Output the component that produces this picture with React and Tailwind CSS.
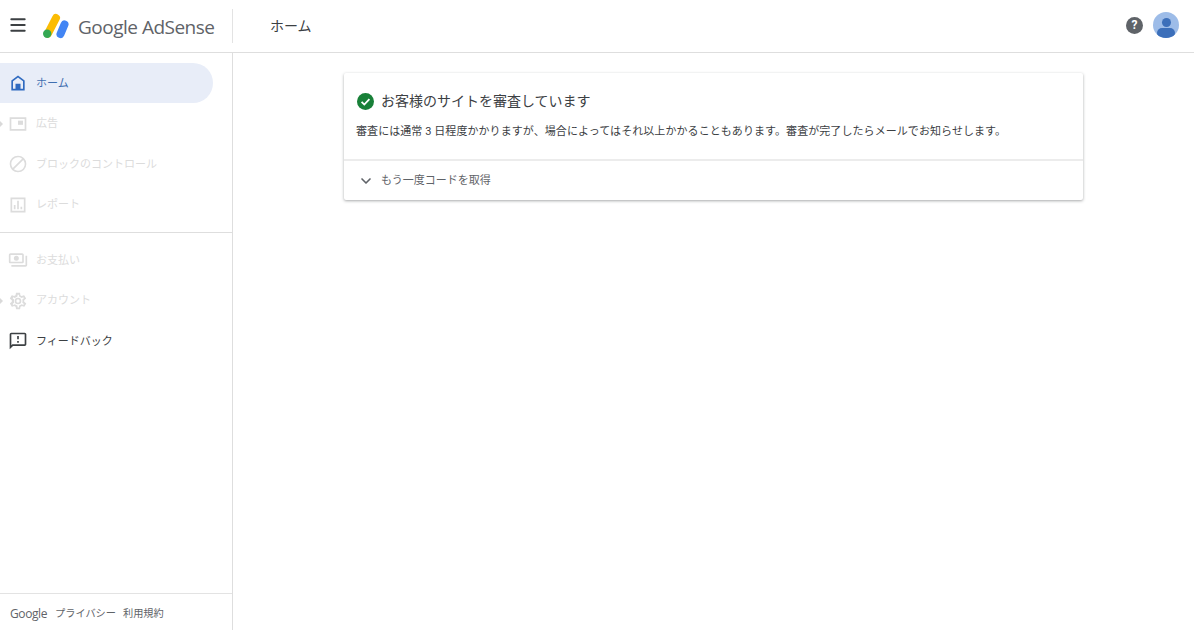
import React from "react";
import { ChevronDown, Menu } from "lucide-react";

const JP = "font-['Roboto','Noto_Sans_CJK_JP',sans-serif]";

const HomeIcon = ({ className }) => (
  <svg viewBox="0 0 24 24" fill="currentColor" className={className} aria-hidden="true">
    <path d="M12 3 4 9v12h16V9l-8-6zm6 16h-3v-6H9v6H6v-9l6-4.5 6 4.5v9z" />
  </svg>
);

const AdsIcon = ({ className }) => (
  <svg viewBox="0 0 24 24" fill="currentColor" className={className} aria-hidden="true">
    <path d="M2 4v16h20V4H2zm18 14H4V6h16v12z" />
    <path d="M12 8h6v5h-6z" />
  </svg>
);

const BlockIcon = ({ className }) => (
  <svg viewBox="0 0 24 24" fill="currentColor" className={className} aria-hidden="true">
    <path d="M12 2a10 10 0 1 0 0 20 10 10 0 0 0 0-20zM4 12c0-4.400 3.600-8 8-8 1.800 0 3.500.6 4.900 1.700L5.700 16.900A7.900 7.900 0 0 1 4 12zm8 8c-1.800 0-3.500-.6-4.900-1.700L18.300 7.100A8 8 0 0 1 12 20z" />
  </svg>
);

const ReportIcon = ({ className }) => (
  <svg viewBox="0 0 24 24" fill="currentColor" className={className} aria-hidden="true">
    <path d="M3 3v18h18V3H3zm16 16H5V5h14v14z" />
    <path d="M7 12h2v5H7zM11 7h2v10h-2zM15 14h2v3h-2z" />
  </svg>
);

const PaymentIcon = ({ className }) => (
  <svg viewBox="0 0 24 24" fill="currentColor" className={className} aria-hidden="true">
    <path d="M19 14V6c0-1.100-.9-2-2-2H3c-1.100 0-2 .9-2 2v8c0 1.100.9 2 2 2h14c1.100 0 2-.9 2-2zm-2 0H3V6h14v8zm-7-7a3 3 0 1 0 0 6 3 3 0 0 0 0-6zm13 0v11c0 1.100-.9 2-2 2H4v-2h17V7h2z" />
  </svg>
);

const GearIcon = ({ className }) => (
  <svg viewBox="0 0 24 24" fill="currentColor" className={className} aria-hidden="true">
    <path d="M19.400 13c0-.3.1-.6.1-1s0-.7-.1-1l2.100-1.600c.2-.2.2-.4.1-.6l-2-3.500c-.1-.2-.4-.3-.6-.2l-2.500 1c-.5-.4-1.100-.7-1.700-1L14.500 2.400c0-.2-.2-.4-.5-.4h-4c-.3 0-.5.2-.5.4l-.4 2.700c-.6.2-1.200.6-1.700 1l-2.500-1c-.2-.1-.5 0-.6.2l-2 3.500c-.1.2 0 .5.1.6L4.600 11c0 .3-.1.7-.1 1s0 .7.1 1l-2.100 1.600c-.2.2-.2.4-.1.6l2 3.500c.1.2.4.3.6.2l2.500-1c.5.4 1.100.7 1.700 1l.4 2.700c0 .2.2.4.5.4h4c.3 0 .5-.2.5-.4l.4-2.700c.6-.2 1.200-.6 1.700-1l2.500 1c.2.1.5 0 .6-.2l2-3.500c.1-.2.1-.5-.1-.6L19.400 13zm-2-.9c0 .3 0 .6-.1 1.100l-.1.9.8.6 1 .8-.7 1.200-1.200-.5-.9-.4-.8.6c-.4.3-.8.5-1.200.7l-.9.4-.1 1-.2 1.300h-1.400l-.2-1.300-.1-1-.9-.4c-.4-.2-.8-.4-1.200-.7l-.8-.6-.9.4-1.200.5-.7-1.200 1-.8.8-.6-.1-.9c-.1-.5-.1-.8-.1-1.100s0-.6.1-1.100l.1-.9-.8-.6-1-.8.7-1.200 1.200.5.9.4.8-.6c.4-.3.8-.5 1.200-.7l.9-.4.1-1 .2-1.300h1.400l.2 1.300.1 1 .9.4c.4.2.8.4 1.200.7l.8.6.9-.4 1.200-.5.7 1.200-1 .8-.8.6.1.9c.1.5.1.8.1 1.100zM12 8a4 4 0 1 0 0 8 4 4 0 0 0 0-8zm0 6a2 2 0 1 1 0-4 2 2 0 0 1 0 4z" />
  </svg>
);

const FeedbackIcon = ({ className }) => (
  <svg viewBox="0 0 24 24" fill="currentColor" className={className} aria-hidden="true">
    <path d="M20 2H4c-1.100 0-2 .9-2 2v18l4-4h14c1.100 0 2-.9 2-2V4c0-1.100-.9-2-2-2zm0 14H5.200L4 17.200V4h16v12z" />
    <path d="M11 12h2v2h-2zM11 6h2v4h-2z" />
  </svg>
);

const AdsenseLogo = ({ className }) => (
  <svg viewBox="0 0 27 26" className={className} aria-hidden="true">
    <line x1="5" y1="20.500" x2="13" y2="5" stroke="#fbbc04" strokeWidth="8" strokeLinecap="round" />
    <line x1="17.500" y1="21" x2="21.500" y2="11.500" stroke="#4285f4" strokeWidth="8" strokeLinecap="round" />
    <circle cx="4.200" cy="20.800" r="4.200" fill="#34a853" />
  </svg>
);

const navTop = [
  { label: "ホーム", icon: HomeIcon, active: true },
  { label: "広告", icon: AdsIcon, disabled: true, caret: true },
  { label: "ブロックのコントロール", icon: BlockIcon, disabled: true },
  { label: "レポート", icon: ReportIcon, disabled: true },
];

const navBottom = [
  { label: "お支払い", icon: PaymentIcon, disabled: true },
  { label: "アカウント", icon: GearIcon, disabled: true, caret: true },
  { label: "フィードバック", icon: FeedbackIcon },
];

const NavItem = ({ item }) => {
  const Icon = item.icon;
  const tone = item.active
    ? "bg-[#e8edf8] text-[#2f6ac0]"
    : item.disabled
    ? "text-[#dcdcdc]"
    : "text-[#3c4043]";

  return (
    <div className={`relative mb-[0.5px] flex h-[40px] w-[213px] items-center rounded-r-full pl-[8px] ${tone}`}>
      {item.caret && (
        <span className="absolute left-0 top-1/2 -translate-y-1/2 border-y-[3px] border-l-[3px] border-y-transparent border-l-[#d9d9d9]" />
      )}
      <Icon className="h-[20px] w-[20px] shrink-0" />
      <span className={`ml-[8px] pt-[2px] text-[11px] ${item.active ? "text-[#3f6fb0]" : ""}`}>{item.label}</span>
    </div>
  );
};

export default function App() {
  return (
    <div className={`flex h-[630px] w-[1194px] flex-col overflow-hidden bg-white ${JP}`}>
      {/* Top bar */}
      <header className="flex h-[53px] shrink-0 items-center border-b border-[#dedede]">
        <div className="flex w-[232px] shrink-0 items-center">
          <Menu className="mb-[2px] ml-[8px] h-[20px] w-[20px] text-[#3c4043]" strokeWidth={2.4} />
          <AdsenseLogo className="ml-[15px] h-[26px] w-[27px]" />
          <span className="ml-[8px] whitespace-nowrap pt-[2px] font-['Open_Sans',sans-serif] text-[19px] tracking-[-0.5px] text-[#5f6368]">
            Google AdSense
          </span>
        </div>
        <div className="h-[34px] w-px bg-[#e3e3e3]" />
        <span className="ml-[37px] text-[14px] text-[#3c4043]">ホーム</span>
        <div className="mb-[2px] ml-auto flex items-center">
          <div className="flex h-[17px] w-[17px] items-center justify-center rounded-full bg-[#5f6368] text-[12px] font-bold text-white">
            ?
          </div>
          <div className="relative ml-[10px] mr-[15px] h-[26px] w-[26px] overflow-hidden rounded-full bg-[#9dbce8]">
            <div className="mx-auto mt-[6px] h-[9px] w-[9px] rounded-full bg-[#3c6fba]" />
            <div className="mx-auto mt-[1px] h-[10px] w-[18px] rounded-full bg-[#3c6fba]" />
          </div>
        </div>
      </header>

      <div className="flex min-h-0 flex-1">
        {/* Sidebar */}
        <aside className="flex w-[233px] shrink-0 flex-col border-r border-[#dedede]">
          <nav className="pt-[10px]">
            {navTop.map((item) => (
              <NavItem key={item.label} item={item} />
            ))}
          </nav>
          <div className="mt-[7px] border-t border-[#dedede] pt-[7px]">
            {navBottom.map((item) => (
              <NavItem key={item.label} item={item} />
            ))}
          </div>
          <footer className="mt-auto flex h-[37px] items-center border-t border-[#e3e3e3] pl-[10px] pt-[3px] text-[10.2px] text-[#5f6368]">
            <span className="font-['Open_Sans',sans-serif] text-[12px] tracking-[-0.4px]">Google</span>
            <span className="ml-[8px]">プライバシー</span>
            <span className="ml-[7px]">利用規約</span>
          </footer>
        </aside>

        {/* Main */}
        <main className="min-w-0 flex-1 pt-[20px]">
          <section className="mx-auto w-[739px] rounded-[2px] bg-white shadow-[0_1px_3px_rgba(60,64,67,0.45)]">
            <div className="h-[88px] border-b-2 border-[#ececec] px-[12px] pt-[18px]">
              <div className="flex items-center">
                <svg viewBox="0 0 24 24" className="ml-[1px] h-[17px] w-[17px] shrink-0" aria-hidden="true">
                  <circle cx="12" cy="12" r="12" fill="#188038" />
                  <path d="M6.500 12.500 10.300 16.300 17.500 8.800" fill="none" stroke="#fff" strokeWidth="2.600" />
                </svg>
                <h1 className="ml-[7px] text-[14px] font-normal text-[#3c4043]">お客様のサイトを審査しています</h1>
              </div>
              <p className="mt-[12px] whitespace-nowrap text-[11px] tracking-[0.07px] text-[#3c4043]">
                審査には通常 3 日程度かかりますが、場合によってはそれ以上かかることもあります。審査が完了したらメールでお知らせします。
              </p>
            </div>
            <div className="flex h-[39px] items-center pl-[14px] pt-[2px] text-[#5f6368]">
              <ChevronDown className="mb-[2px] h-[16px] w-[16px]" strokeWidth={2.5} />
              <span className="ml-[7px] text-[11px]">もう一度コードを取得</span>
            </div>
          </section>
        </main>
      </div>
    </div>
  );
}
